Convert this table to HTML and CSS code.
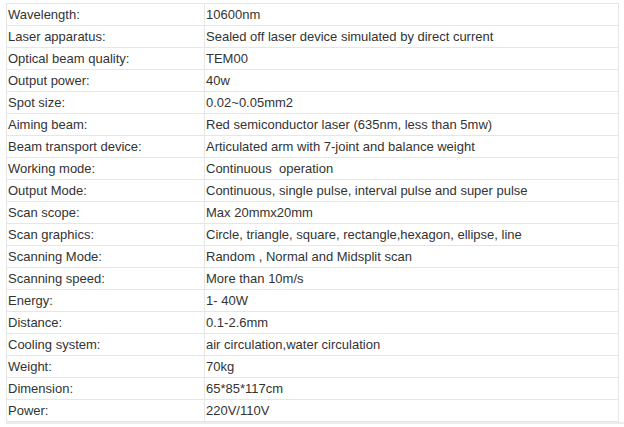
FILE: index.html
```html
<!DOCTYPE html>
<html>
<head>
<meta charset="utf-8">
<link rel="stylesheet" href="styles.css">
</head>
<body>
<div class="wrap">
<table class="spec">
<tr><td class="k">Wavelength:</td><td class="v">10600nm</td></tr>
<tr><td class="k">Laser apparatus:</td><td class="v">Sealed off laser device simulated by direct current</td></tr>
<tr><td class="k">Optical beam quality:</td><td class="v">TEM00</td></tr>
<tr><td class="k">Output power:</td><td class="v">40w</td></tr>
<tr><td class="k">Spot size:</td><td class="v">0.02~0.05mm2</td></tr>
<tr><td class="k">Aiming beam:</td><td class="v">Red semiconductor laser (635nm, less than 5mw)</td></tr>
<tr><td class="k">Beam transport device:</td><td class="v">Articulated arm with 7-joint and balance weight</td></tr>
<tr><td class="k">Working mode:</td><td class="v">Continuous&nbsp; operation</td></tr>
<tr><td class="k">Output Mode:</td><td class="v">Continuous, single pulse, interval pulse and super pulse</td></tr>
<tr><td class="k">Scan scope:</td><td class="v">Max 20mmx20mm</td></tr>
<tr><td class="k">Scan graphics:</td><td class="v">Circle, triangle, square, rectangle,hexagon, ellipse, line</td></tr>
<tr><td class="k">Scanning Mode:</td><td class="v">Random , Normal and Midsplit scan</td></tr>
<tr><td class="k">Scanning speed:</td><td class="v">More than 10m/s</td></tr>
<tr><td class="k">Energy:</td><td class="v">1- 40W</td></tr>
<tr><td class="k">Distance:</td><td class="v">0.1-2.6mm</td></tr>
<tr><td class="k">Cooling system:</td><td class="v">air circulation,water circulation</td></tr>
<tr><td class="k">Weight:</td><td class="v">70kg</td></tr>
<tr><td class="k">Dimension:</td><td class="v">65*85*117cm</td></tr>
<tr><td class="k">Power:</td><td class="v">220V/110V</td></tr>
</table>
</div>
</body>
</html>
```
FILE: styles.css
```css
html, body {
  margin: 0;
  padding: 0;
  background: #ffffff;
}
.wrap {
  margin-left: 6px;
  padding-top: 3px;
  border-bottom: 2px solid #ececec;
  width: 618px;
}
.spec {
  border-collapse: collapse;
  width: 613px;
  font-family: "Liberation Sans", Arial, sans-serif;
  font-size: 13px;
  color: #333333;
  table-layout: fixed;
}
.spec td {
  border: 1px solid #e6e6e6;
  height: 22px;
  padding: 0 0 0 1px;
  box-sizing: border-box;
  vertical-align: middle;
  white-space: nowrap;
  line-height: 15px;
}
.spec td.k {
  width: 198px;
}
```
